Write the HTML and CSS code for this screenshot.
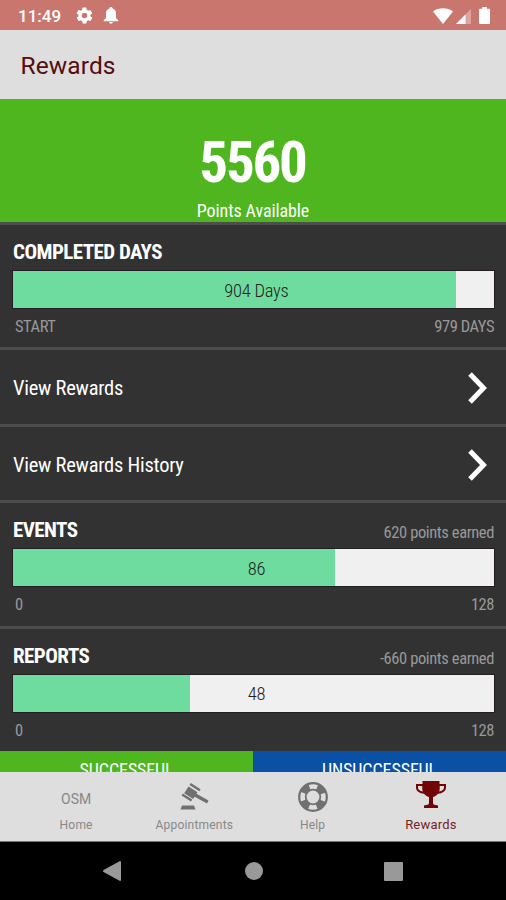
FILE: index.html
```html
<!DOCTYPE html>
<html lang="en">
<head>
<meta charset="utf-8">
<title>Rewards</title>
<link rel="stylesheet" href="styles.css">
</head>
<body>
<div class="phone">
  <div class="status">
    <span class="clock">11:49</span>
    <svg class="gear" viewBox="0 0 24 24"><path d="M19.4 13a7.500 7.500 0 0 0 0-2l2.100-1.600c.2-.2.2-.4.1-.6l-2-3.500c-.1-.2-.4-.3-.6-.2l-2.500 1a7 7 0 0 0-1.700-1L14.400 2.400c0-.2-.2-.4-.5-.4h-4c-.2 0-.4.2-.5.4L9 5.100a7 7 0 0 0-1.700 1l-2.500-1c-.2-.1-.5 0-.6.2l-2 3.500c-.1.2 0 .5.1.6L4.500 11a7.500 7.500 0 0 0 0 2l-2.100 1.600c-.2.2-.2.4-.1.6l2 3.500c.1.2.4.3.6.2l2.500-1a7 7 0 0 0 1.700 1l.4 2.700c0 .2.2.4.5.4h4c.2 0 .4-.2.5-.4l.4-2.700a7 7 0 0 0 1.700-1l2.500 1c.2.1.5 0 .6-.2l2-3.500c.1-.2 0-.5-.1-.6zM12 15.500a3.500 3.500 0 1 1 0-7 3.500 3.500 0 0 1 0 7z"/></svg>
    <svg class="bell" viewBox="0 0 16 17"><path d="M8 0c1 0 1.500.7 1.500 1.600C12 2.300 13 4.300 13 6.500V11l2.300 2.300v1H.7v-1L3 11V6.500c0-2.200 1-4.200 3.500-4.900C6.500.7 7 0 8 0zM6.200 15h3.600c0 1-.8 1.700-1.800 1.700S6.200 16 6.200 15z"/></svg>
    <span class="spacer"></span>
    <svg class="wifi" viewBox="0 0 20 16"><path d="M0 3.500C5.500-.9 14.500-.9 20 3.500L10 16z"/></svg>
    <svg class="signal" viewBox="0 0 15 15"><path d="M15 0v15H0z" opacity=".35"/><path d="M9.500 5.500V15H0z"/></svg>
    <svg class="battery" viewBox="0 0 11 17"><path d="M3.200 0h4.600v1.800H10a1 1 0 0 1 1 1V16a1 1 0 0 1-1 1H1a1 1 0 0 1-1-1V2.800a1 1 0 0 1 1-1h2.200z"/></svg>
  </div>
  <header class="header"><h1>Rewards</h1></header>
  <main class="content">
    <section class="hero">
      <div class="points cond">5560</div>
      <div class="points-label cond">Points Available</div>
    </section>
    <section class="panel first">
      <div class="panel-head"><h2 class="cond">COMPLETED DAYS</h2></div>
      <div class="bar"><div class="fill" style="width:92%"></div><span class="value cond">904 Days</span></div>
      <div class="range"><span class="cond">START</span><span class="cond">979 DAYS</span></div>
    </section>
    <a class="row"><span class="cond">View Rewards</span><svg class="chevron" viewBox="0 0 20 32"><path d="M2 2l13.500 14L2 30"/></svg></a>
    <a class="row"><span class="cond">View Rewards History</span><svg class="chevron" viewBox="0 0 20 32"><path d="M2 2l13.500 14L2 30"/></svg></a>
    <section class="panel">
      <div class="panel-head"><h2 class="cond">EVENTS</h2><span class="earned cond">620 points earned</span></div>
      <div class="bar"><div class="fill" style="width:66.9%"></div><span class="value cond">86</span></div>
      <div class="range"><span class="cond">0</span><span class="cond">128</span></div>
    </section>
    <section class="panel">
      <div class="panel-head"><h2 class="cond">REPORTS</h2><span class="earned cond">-660 points earned</span></div>
      <div class="bar"><div class="fill" style="width:36.8%"></div><span class="value cond">48</span></div>
      <div class="range"><span class="cond">0</span><span class="cond">128</span></div>
    </section>
    <div class="results"><div class="good"><span class="cond">SUCCESSFUL</span></div><div class="bad"><span class="cond">UNSUCCESSFUL</span></div></div>
  </main>
  <nav class="tabs">
    <a class="tab"><span class="osm">OSM</span><span>Home</span></a>
    <a class="tab"><svg viewBox="0 0 30 30"><path d="M10.500 3l1.300-2 9.800 6.300-1.300 2zM2.500 13.500l1.300-2 9.500 6-1.300 2zM9.500 4.500l9 5.700-4.300 6.800-9-5.700zM17 11.500L29.500 18.500 28 21.500 15.300 14.500zM3 23.500h12l1.500 4h-15z"/></svg><span>Appointments</span></a>
    <a class="tab"><svg viewBox="0 0 30 30"><g fill="none" stroke="currentColor"><circle cx="15" cy="15" r="13.800" stroke-width="2.200"/><circle cx="15" cy="15" r="7.300" stroke-width="1.800"/><circle cx="15" cy="15" r="10.500" stroke-width="6" stroke-dasharray="8.700 7.793" stroke-dashoffset="-3.900"/></g></svg><span>Help</span></a>
    <a class="tab active"><svg viewBox="0 0 30 28"><path d="M6.500 0h17v3H30v3.500c0 3.500-3.500 6-8 6.300-1.200 1.600-3 2.700-5 3.200V22c0 1.500 1.500 2 5 2.500V27H8v-2.500c3.500-.5 5-1 5-2.500v-6c-2-.5-3.800-1.600-5-3.200-4.500-.3-8-2.800-8-6.300V3h6.500zM2 5v1.500c0 2 1.800 3.500 4.800 4C6.200 9 6.200 7 6.300 5zm21.700 0c.1 2 .1 4-.5 5.500 3-.5 4.800-2 4.800-4V5z"/></svg><span>Rewards</span></a>
  </nav>
  <div class="system">
    <svg class="back" viewBox="0 0 18 20"><path d="M17 0q1 0 1 1v18q0 1-1 1L.5 11q-1-1 0-2z"/></svg>
    <span class="home"></span>
    <span class="recent"></span>
  </div>
</div>
</body>
</html>
```
FILE: styles.css
```css
* { box-sizing: border-box; }
body { margin: 0; font-family: Roboto, "Liberation Sans", sans-serif; }
h1, h2 { margin: 0; }
.phone { width: 506px; height: 900px; display: flex; flex-direction: column; overflow: hidden; background: #000; }
.cond { font-family: "Roboto Condensed", Roboto, sans-serif; font-stretch: 75%; white-space: nowrap; }

.status { height: 30px; flex: none; display: flex; align-items: center; padding: 1px 16px 0 18px; background: #c9766f; color: #fff; }
.status svg { fill: #fff; }
.clock { font-size: 17px; font-weight: 500; width: 57px; padding-top: 1px; }
.gear { width: 19px; height: 19px; margin-right: 9px; }
.bell { width: 16px; height: 17px; }
.spacer { flex: 1; }
.wifi { width: 20px; height: 16px; margin-right: 3px; }
.signal { width: 15px; height: 15px; margin: 1px 8px 0 0; }
.battery { width: 11px; height: 17px; }

.header { height: 69px; flex: none; display: flex; align-items: center; padding: 2px 20.500px 0; background: #dedede; }
.header h1 { font-size: 24.500px; font-weight: 400; color: #560d0e; letter-spacing: .1px; }

.content { height: 673px; flex: none; overflow: hidden; background: #323232; }
.hero { height: 123px; background: #4fb61f; color: #fff; text-align: center; padding-top: 31px; }
.points { font-size: 57px; line-height: 66px; font-weight: 700; letter-spacing: -2.200px; text-indent: -1px; }
.points-label { font-size: 18px; line-height: 30px; letter-spacing: -.1px; }

.panel { height: 125.500px; border-top: 3px solid #4d4d4d; padding: 10px 12px 0 13px; }
.panel.first { height: 125px; }
.panel-head { height: 36px; display: flex; justify-content: space-between; align-items: flex-start; }
.panel-head h2 { font-size: 21px; line-height: 34px; font-weight: 700; letter-spacing: -.55px; color: #fff; }
.earned { font-size: 16.500px; line-height: 40px; letter-spacing: -.4px; color: #999; }
.bar { height: 37px; position: relative; display: flex; align-items: center; justify-content: center; background: #f0f0f0; box-shadow: 0 0 0 1px #241d24; }
.fill { position: absolute; left: 0; top: 0; bottom: 0; background: #6fdc9f; }
.value { position: relative; font-size: 18.500px; font-weight: 300; letter-spacing: -.25px; color: #222; padding: 2px 0 0 6px; }
.range { display: flex; justify-content: space-between; padding: 7px 0 0 2px; font-size: 16.500px; line-height: 23px; letter-spacing: -.45px; color: #999; }
.row { height: 76.500px; border-top: 3px solid #4d4d4d; display: flex; align-items: center; justify-content: space-between; padding: 3px 18px 0 13px; font-size: 20.500px; letter-spacing: -.25px; color: #fff; }
.chevron { width: 20px; height: 32px; fill: none; stroke: #fff; stroke-width: 5; }
.results { display: flex; color: #fff; font-size: 18px; line-height: 37px; text-align: center; letter-spacing: -.1px; }
.results > div { flex: 1; height: 60px; }
.good { background: #4fb61f; }
.bad { background: #0a50a4; }

.tabs { height: 70px; flex: none; display: flex; padding: 0 16px 0 17px; background: #dedede; border-bottom: 1px solid #777; }
.tab { flex: 1; display: flex; flex-direction: column; align-items: center; padding-top: 10px; font-size: 12px; line-height: 17px; letter-spacing: .2px; color: #888; }
.tab svg { width: 30px; height: 30px; margin-bottom: 5px; fill: #707070; color: #707070; }
.tab .osm { font-size: 14px; height: 35px; line-height: 34px; letter-spacing: 0; }
.tab.active { color: #752326; padding-top: 9px; font-size: 13px; }
.tab.active svg { fill: #700407; height: 28px; margin-bottom: 7px; }

.system { flex: 1; display: flex; align-items: center; justify-content: center; background: #000; }
.back { width: 18px; height: 20px; fill: #999; margin-right: 124px; }
.home { width: 18px; height: 18px; border-radius: 50%; background: #999; margin-right: 121px; }
.recent { width: 19px; height: 19px; border-radius: 1px; background: #999; }
```
